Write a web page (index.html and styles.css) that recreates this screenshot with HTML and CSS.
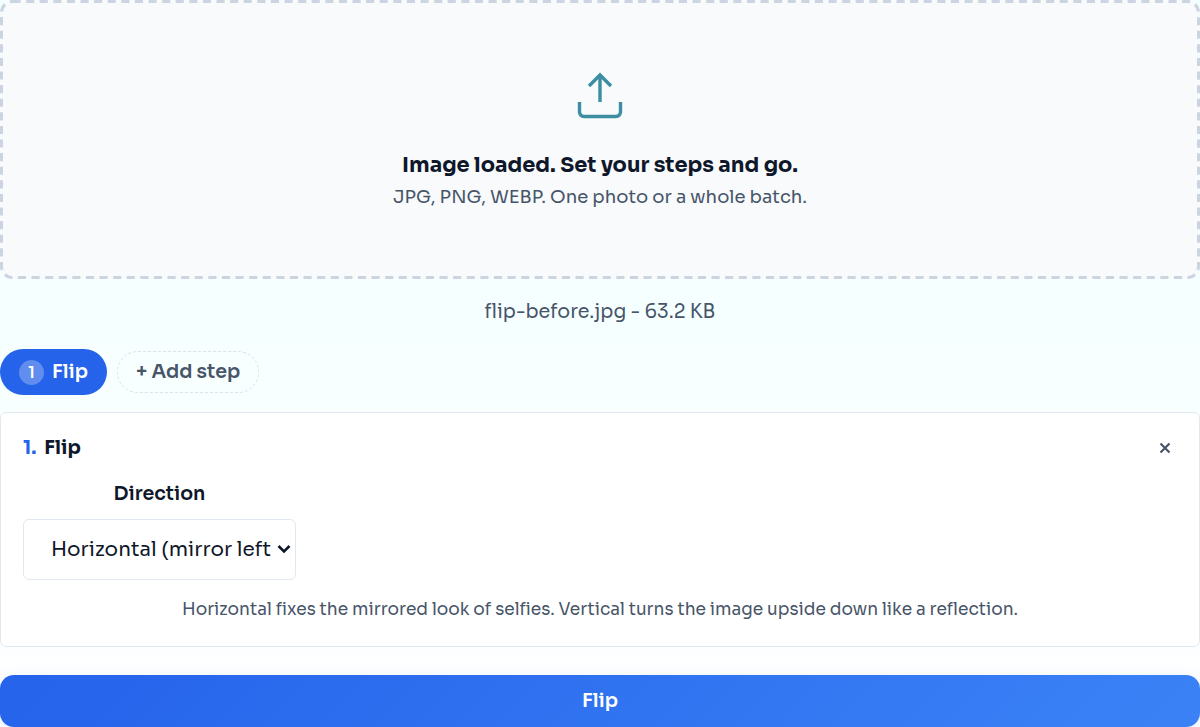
FILE: index.html
```html
<!DOCTYPE html>
<html lang="en">
<head>
<meta charset="utf-8">
<meta name="viewport" content="width=device-width, initial-scale=1">
<title>Flip image</title>
<link rel="stylesheet" href="styles.css">
</head>
<body>
<main class="tool">
  <button type="button" class="dropzone">
    <svg class="dropzone-outline" aria-hidden="true"><rect class="dropzone-dashes" x="1.5" y="1.5" rx="11"/></svg>
    <svg class="upload-icon" viewBox="0 0 48 48" aria-hidden="true">
      <path d="M3.500 31v10a4.500 4.500 0 0 0 4.500 4.500h32a4.500 4.500 0 0 0 4.500-4.500V31M24 31V4M13 15l11-11 11 11"/>
    </svg>
    <span class="dropzone-title">Image loaded. Set your steps and go.</span>
    <span class="dropzone-hint">JPG, PNG, WEBP. One photo or a whole batch.</span>
  </button>
  <p class="file-info">flip-before.jpg - 63.2 KB</p>
  <div class="steps">
    <button type="button" class="step"><span class="step-number">1</span><span>Flip</span></button>
    <button type="button" class="add-step">+ Add step</button>
  </div>
  <section class="panel">
    <header class="panel-header">
      <h2 class="panel-title"><span class="panel-number">1.</span> <span>Flip</span></h2>
      <button type="button" class="remove" aria-label="Remove step">
        <svg class="remove-icon" viewBox="0 0 12 12" aria-hidden="true"><path d="M1.500 1.500l9 9M10.500 1.500l-9 9"/></svg>
      </button>
    </header>
    <div class="field">
      <label class="field-label" for="direction">Direction</label>
      <div class="select-box">
        <select class="field-select" id="direction">
          <option>Horizontal (mirror left to right)</option>
          <option>Vertical (upside down)</option>
        </select>
        <svg class="select-arrow" viewBox="0 0 14 10" aria-hidden="true"><path d="M1.500 2l5.500 5.500L12.500 2"/></svg>
      </div>
    </div>
    <p class="panel-note">Horizontal fixes the mirrored look of selfies. Vertical turns the image upside down like a reflection.</p>
  </section>
  <button type="button" class="submit">Flip</button>
</main>
</body>
</html>
```
FILE: styles.css
```css
* { box-sizing: border-box; }
body {
  margin: 0;
  font-family: Sora, Inter, "Liberation Sans", sans-serif;
  color: #0f172a;
  background: linear-gradient(#f2ffff, #f6ffff 45%, #fcfeff 80%, #fff);
}
button, select { font-family: inherit; cursor: pointer; }
.tool { display: flex; flex-direction: column; }
.dropzone {
  position: relative;
  display: flex;
  flex-direction: column;
  align-items: center;
  padding: 71px 24px 68px;
  border: 0;
  border-radius: 12px;
  background: #f8fafc;
}
.dropzone-outline { position: absolute; inset: 0; width: 100%; height: 100%; }
.dropzone-dashes {
  width: calc(100% - 3px);
  height: calc(100% - 3px);
  fill: none;
  stroke: #cbd5e1;
  stroke-width: 3;
  stroke-dasharray: 8.1 5.5;
}
.upload-icon {
  width: 48px;
  height: 48px;
  margin-bottom: 30px;
  fill: none;
  stroke: #3d8ea3;
  stroke-width: 3.400;
}
.dropzone-title { font-size: 21px; line-height: 32px; font-weight: 700; color: #0f172a; }
.dropzone-hint { margin-top: 2px; font-size: 18px; line-height: 28px; color: #475569; }
.file-info { margin: 19px 0 23px; text-align: center; font-size: 19px; line-height: 28px; color: #475569; }
.steps { display: flex; align-items: center; gap: 10px; margin-bottom: 17px; }
.step {
  display: flex;
  align-items: center;
  gap: 8px;
  padding: 10px 19px;
  border: 0;
  border-radius: 24px;
  background: #2563eb;
  color: #fff;
  font-size: 19px;
  line-height: 26px;
  font-weight: 600;
}
.step-number {
  width: 25px;
  border-radius: 50%;
  background: #618eee;
  font-size: 15px;
  line-height: 25px;
}
.add-step {
  padding: 7px 18px;
  border: 1px dashed #dbe2ea;
  border-radius: 21px;
  background: transparent;
  color: #475569;
  font-size: 19px;
  line-height: 26px;
  font-weight: 600;
}
.panel { padding: 22px; border: 1px solid #e2e8f0; border-radius: 6px; background: #fff; }
.panel-header { display: flex; align-items: center; justify-content: space-between; }
.panel-title { display: flex; gap: 8px; margin: 0; font-size: 19px; line-height: 26px; font-weight: 700; }
.panel-number { color: #2563eb; }
.remove { display: flex; padding: 6px; border: 0; background: transparent; }
.remove-icon { width: 12px; height: 12px; fill: none; stroke: #475569; stroke-width: 2.200; }
.field { display: flex; flex-direction: column; width: 273px; margin-top: 20px; }
.field-label { margin-bottom: 12px; text-align: center; font-size: 19px; line-height: 26px; font-weight: 600; }
.select-box { position: relative; display: flex; }
.field-select {
  width: 100%;
  height: 61px;
  padding: 0 20px 0 27px;
  border: 1px solid #e2e8f0;
  border-radius: 6px;
  background-color: #fff;
  color: #0f172a;
  font-size: 20px;
  appearance: none;
  text-overflow: clip;
}
.select-arrow {
  position: absolute;
  top: 25px;
  right: 5px;
  width: 14px;
  height: 10px;
  fill: none;
  stroke: #0f172a;
  stroke-width: 2.600;
  pointer-events: none;
}
.panel-note { margin: 17px 0 1px; text-align: center; font-size: 17px; line-height: 26px; color: #475569; }
.submit {
  margin-top: 28px;
  padding: 12px;
  border: 0;
  border-radius: 14px;
  background: linear-gradient(135deg, #2563eb, #3b82f6);
  box-shadow: 0 4px 16px #2563eb1a;
  color: #fff;
  font-size: 19px;
  line-height: 28px;
  font-weight: 600;
}
```
